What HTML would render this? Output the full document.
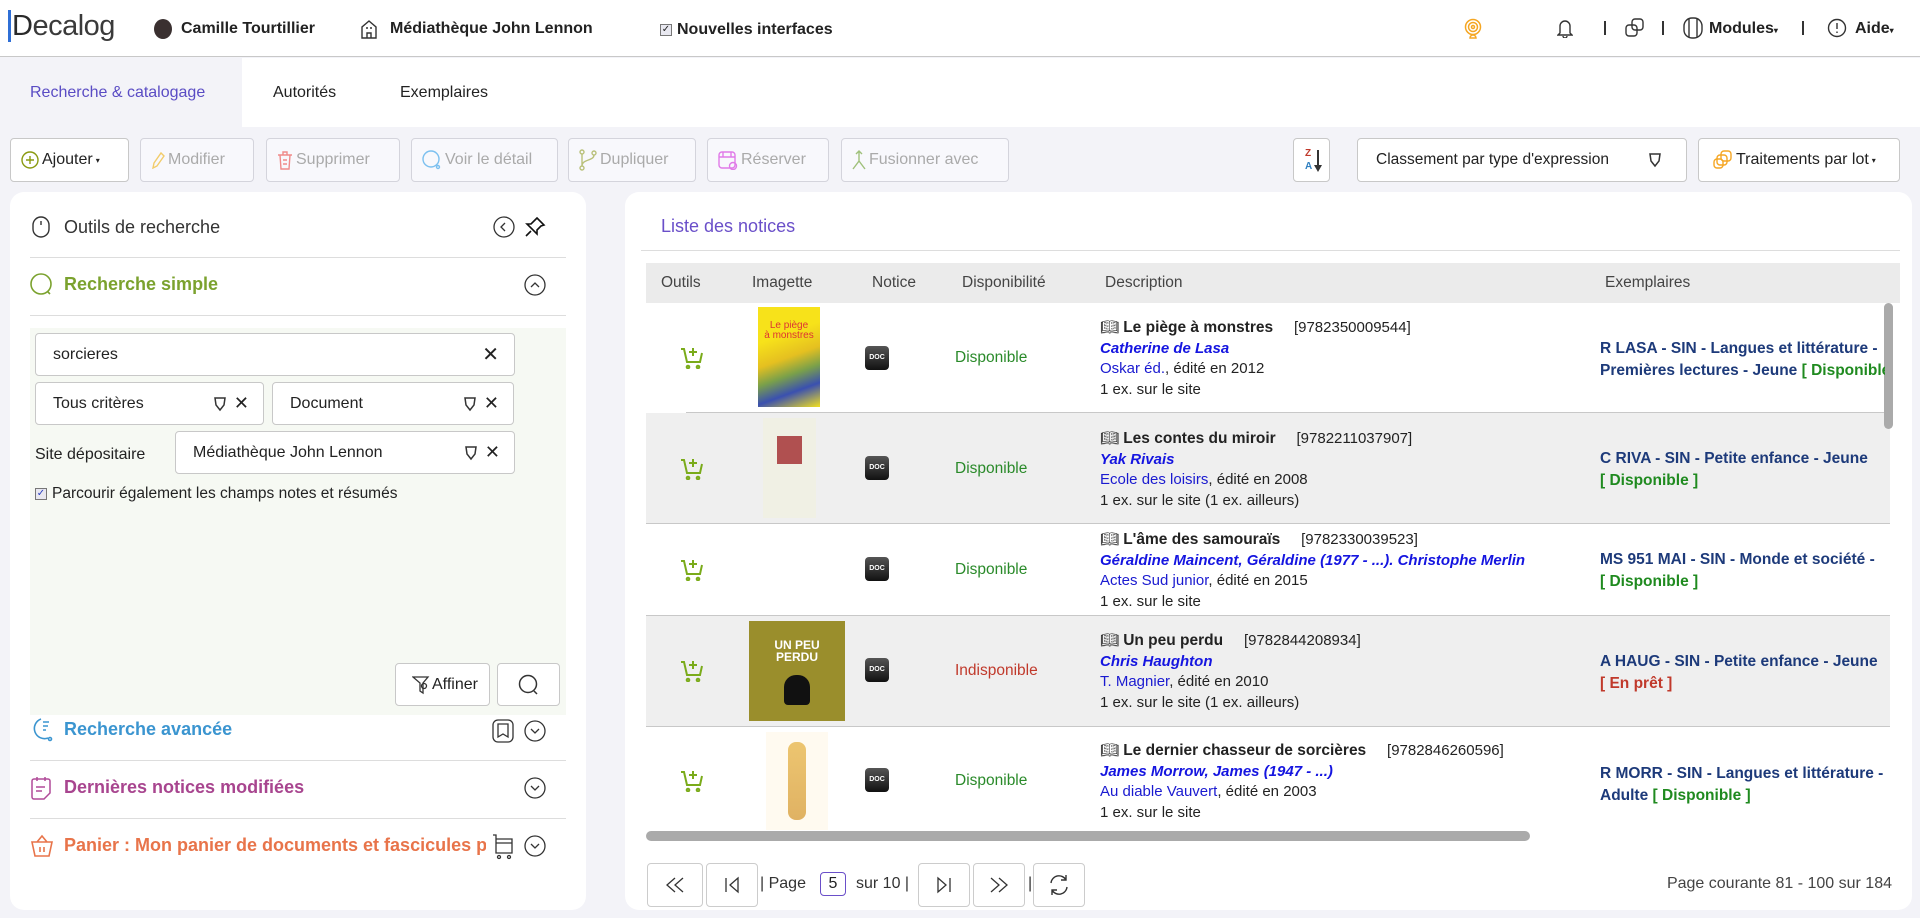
<!DOCTYPE html>
<html><head><meta charset="utf-8">
<style>
*{box-sizing:border-box;margin:0;padding:0}
body{width:1920px;height:918px;overflow:hidden;background:#f3f3f8;font-family:"Liberation Sans",sans-serif;font-size:15px;color:#222;position:relative}
.a{position:absolute;white-space:nowrap}
svg{display:block}
.btn{position:absolute;top:138px;height:44px;border:1px solid #d4d4dc;border-radius:4px;background:#f8f8fc;display:flex;align-items:center;padding:0 10px;color:#aaa;font-size:16px;gap:3px}
.box{position:absolute;border:1px solid #c8c8c8;border-radius:4px;background:#fff;display:flex;align-items:center;padding-left:17px;font-size:16px;color:#222}
.desc{position:absolute;left:1100px;line-height:20.5px;font-size:15px}
.desc b{font-size:15.5px}
.au{color:#1515e0;font-weight:bold;font-style:italic}
.pub{color:#1a1ad0}
.ex{position:absolute;left:1600px;width:285px;overflow:hidden;white-space:nowrap;color:#1d3a7a;font-weight:bold;line-height:22px;font-size:15.5px}
.g{color:#1f8a1f}
.doc{position:absolute;left:865px;width:24px;height:24px;border-radius:4px;background:linear-gradient(#555,#111);color:#fff;font-size:7px;font-weight:bold;text-align:center;line-height:24px}
.disp{position:absolute;left:955px;color:#2a8a2a;font-size:15.5px}
.cart{position:absolute;left:680px}
.pb{position:absolute;top:863px;height:44px;border:1px solid #ccc;border-radius:4px;background:#fff;display:flex;align-items:center;justify-content:center}
.hd{top:20px;font-weight:bold;font-size:16px}
</style></head><body>
<!-- header -->
<div class="a" style="left:0;top:0;width:1920px;height:57px;background:#fff;border-bottom:1px solid #c8c8c8"></div>
<div class="a" style="left:10px;top:10px;font-size:29px;color:#3a3a3a;letter-spacing:-0.5px"><span style="color:#2a2a2a;border-left:3px solid #2f6fd6;padding-left:1px;margin-left:-2px">D</span>ecalog</div>
<div class="a" style="left:154px;top:19px;width:18px;height:20px;border-radius:50%;background:#3a3030"></div>
<div class="a hd" style="left:181px">Camille Tourtillier</div>
<svg class="a" style="left:360px;top:19px" width="18" height="20" viewBox="0 0 18 20" fill="none" stroke="#333" stroke-width="1.4"><path d="M2 19V8L9 2l7 6v11zM7 19v-5h4v5M6 9h2M10 9h2"/></svg>
<div class="a hd" style="left:390px">Médiathèque John Lennon</div>
<div class="a" style="left:660px;top:24px;width:12px;height:12px;border:1px solid #777;background:#e8e8f0;font-size:10px;line-height:10px;text-align:center">✓</div>
<div class="a hd" style="left:677px;top:21px">Nouvelles interfaces</div>
<svg class="a" style="left:1464px;top:18px" width="18" height="22" viewBox="0 0 18 22" fill="none" stroke="#f5a623" stroke-width="1.5"><circle cx="9" cy="9" r="7.5"/><circle cx="9" cy="9" r="4.5"/><circle cx="9" cy="9" r="1.5"/><path d="M6 20a3 3 0 0 1 6 0z"/></svg>
<svg class="a" style="left:1557px;top:18px" width="16" height="20" viewBox="0 0 16 20" fill="none" stroke="#333" stroke-width="1.4"><path d="M3 15V8a5 5 0 0 1 10 0v7l2 2H1zM6 18a2 2 0 0 0 4 0"/></svg>
<div class="a" style="left:1604px;top:21px;width:2px;height:14px;background:#333"></div>
<svg class="a" style="left:1625px;top:18px" width="20" height="20" viewBox="0 0 20 20" fill="none" stroke="#333" stroke-width="1.4"><rect x="7" y="1" width="11" height="11" rx="3"/><rect x="1" y="7" width="11" height="11" rx="3"/></svg>
<div class="a" style="left:1662px;top:21px;width:2px;height:14px;background:#333"></div>
<svg class="a" style="left:1683px;top:17px" width="20" height="22" viewBox="0 0 20 22" fill="none" stroke="#333" stroke-width="1.4"><rect x="1" y="1" width="18" height="20" rx="8"/><path d="M6 2v18M14 2v18"/></svg>
<div class="a hd" style="left:1709px">Modules<span style="font-size:8px">▾</span></div>
<div class="a" style="left:1802px;top:21px;width:2px;height:14px;background:#333"></div>
<svg class="a" style="left:1827px;top:18px" width="20" height="20" viewBox="0 0 20 20" fill="none" stroke="#333" stroke-width="1.4"><circle cx="10" cy="10" r="8.5"/><path d="M10 5v6M10 13.5v1.5"/></svg>
<div class="a hd" style="left:1855px">Aide<span style="font-size:8px">▾</span></div>
<!-- tabs -->
<div class="a" style="left:0;top:58px;width:1920px;height:69px;background:#fff"></div>
<div class="a" style="left:0;top:58px;width:242px;height:69px;background:#f3f3f8"></div>
<div class="a" style="left:30px;top:84px;color:#5a4cc4;font-size:16px">Recherche &amp; catalogage</div>
<div class="a" style="left:273px;top:84px;font-size:16px;color:#222">Autorités</div>
<div class="a" style="left:400px;top:84px;font-size:16px;color:#222">Exemplaires</div>
<!-- toolbar -->
<div class="btn" style="left:10px;width:119px;background:#fff;color:#222;border-color:#c8c8c8"><svg width="18" height="18" viewBox="0 0 18 18" fill="none" stroke="#8a9a10" stroke-width="1.4"><circle cx="9" cy="9" r="8"/><path d="M9 5v8M5 9h8"/></svg>Ajouter<span style="font-size:8px">▾</span></div>
<div class="btn" style="left:140px;width:114px"><svg width="14" height="18" viewBox="0 0 14 18" fill="none" stroke="#f2cc6a" stroke-width="1.4"><path d="M2 17l1-5L10 2l3 3-7 10z"/></svg>Modifier</div>
<div class="btn" style="left:266px;width:134px"><svg width="16" height="20" viewBox="0 0 16 20" fill="none" stroke="#f08a8a" stroke-width="1.4"><path d="M1 5h14M6 5V2h4v3M3 5l1 14h8l1-14M6 10h4M6 14h4"/></svg>Supprimer</div>
<div class="btn" style="left:411px;width:147px"><svg width="20" height="20" viewBox="0 0 20 20" fill="none" stroke="#7cc0ef" stroke-width="1.4"><circle cx="9" cy="9" r="8"/><circle cx="16" cy="17" r="1.5"/></svg>Voir le détail</div>
<div class="btn" style="left:568px;width:128px"><svg width="18" height="22" viewBox="0 0 18 22" fill="none" stroke="#b9c07a" stroke-width="1.4"><circle cx="3" cy="3" r="2"/><circle cx="3" cy="19" r="2"/><circle cx="15" cy="4" r="2"/><path d="M3 5v12M15 6c0 6-12 4-12 11"/></svg>Dupliquer</div>
<div class="btn" style="left:707px;width:122px"><svg width="20" height="20" viewBox="0 0 20 20" fill="none" stroke="#e07ae8" stroke-width="1.4"><rect x="1" y="2" width="16" height="16" rx="3"/><path d="M1 7h16M5 2v5M13 2v5"/><circle cx="15" cy="16" r="3.5"/></svg>Réserver</div>
<div class="btn" style="left:841px;width:168px"><svg width="14" height="20" viewBox="0 0 14 20" fill="none" stroke="#9fc07a" stroke-width="1.4"><path d="M7 1v10L1 19M7 11l6 8M4 4l3-3 3 3"/></svg>Fusionner avec</div>
<div class="btn" style="left:1293px;width:37px;background:#fff;border-color:#c8c8c8;padding:0"><span class="a" style="left:11px;top:9px;color:#c0392b;font-size:10px;font-weight:bold">Z</span><span class="a" style="left:11px;top:22px;color:#2f7fc0;font-size:10px;font-weight:bold">A</span><svg class="a" style="left:20px;top:11px" width="8" height="22" viewBox="0 0 8 22" fill="#333"><path d="M3 0h2v15h3l-4 7-4-7h3z"/></svg></div>
<div class="btn" style="left:1357px;width:330px;background:#fff;color:#222;border-color:#c8c8c8;padding-left:18px;font-size:15.5px">Classement par type d'expression<svg style="margin-left:auto;margin-right:14px" width="14" height="16" viewBox="0 0 14 16" fill="none" stroke="#333" stroke-width="1.5"><path d="M2 2h10l-1 7-4 5-4-5z"/></svg></div>
<div class="btn" style="left:1698px;width:202px;background:#fff;color:#222;border-color:#c8c8c8;padding-left:14px;font-size:16px"><svg width="20" height="20" viewBox="0 0 20 20" fill="none" stroke="#f5a623" stroke-width="1.4"><rect x="8" y="1" width="10" height="10" rx="3"/><rect x="4" y="5" width="10" height="10" rx="3"/><rect x="1" y="9" width="9" height="9" rx="3"/></svg>Traitements par lot<span style="font-size:8px">▾</span></div>
<!-- left panel -->
<div class="a" style="left:10px;top:192px;width:576px;height:718px;background:#fff;border-radius:14px"></div>
<svg class="a" style="left:32px;top:216px" width="18" height="22" viewBox="0 0 18 22" fill="none" stroke="#333" stroke-width="1.4"><rect x="1" y="1" width="16" height="20" rx="8"/><path d="M9 5v4"/></svg>
<div class="a" style="left:64px;top:217px;font-size:18px;color:#333">Outils de recherche</div>
<svg class="a" style="left:493px;top:216px" width="22" height="22" viewBox="0 0 22 22" fill="none" stroke="#333" stroke-width="1.3"><circle cx="11" cy="11" r="10"/><path d="M12 7l-4 4 4 4"/></svg>
<svg class="a" style="left:524px;top:216px" width="22" height="22" viewBox="0 0 22 22" fill="none" stroke="#111" stroke-width="1.6"><path d="M13 2l7 7-3 1-4 4 0 4-10-10 4 0 4-4zM7 15l-5 5"/></svg>
<div class="a" style="left:30px;top:257px;width:536px;height:1px;background:#ddd"></div>
<svg class="a" style="left:30px;top:273px" width="24" height="24" viewBox="0 0 24 24" fill="none" stroke="#7ba22e" stroke-width="1.6"><circle cx="11" cy="11" r="10"/><path d="M18 19l2 2"/></svg>
<div class="a" style="left:64px;top:274px;font-size:18px;color:#7ba22e;font-weight:bold">Recherche simple</div>
<svg class="a" style="left:524px;top:273px" width="22" height="24" viewBox="0 0 22 24" fill="none" stroke="#333" stroke-width="1.3"><circle cx="11" cy="12" r="10"/><path d="M7 14l4-4 4 4"/></svg>
<div class="a" style="left:30px;top:315px;width:536px;height:1px;background:#ddd"></div>
<div class="a" style="left:30px;top:328px;width:536px;height:387px;background:#f6f9f3"></div>
<div class="box" style="left:35px;top:333px;width:480px;height:43px">sorcieres<span style="margin-left:auto;margin-right:15px;font-size:20px">✕</span></div>
<div class="box" style="left:35px;top:382px;width:229px;height:43px">Tous critères<svg style="margin-left:auto" width="14" height="16" viewBox="0 0 14 16" fill="none" stroke="#333" stroke-width="1.5"><path d="M2 2h10l-1 7-4 5-4-5z"/></svg><span style="margin:0 14px 0 7px;font-size:18px">✕</span></div>
<div class="box" style="left:272px;top:382px;width:242px;height:43px">Document<svg style="margin-left:auto" width="14" height="16" viewBox="0 0 14 16" fill="none" stroke="#333" stroke-width="1.5"><path d="M2 2h10l-1 7-4 5-4-5z"/></svg><span style="margin:0 14px 0 7px;font-size:18px">✕</span></div>
<div class="a" style="left:35px;top:446px;font-size:16px">Site dépositaire</div>
<div class="box" style="left:175px;top:431px;width:340px;height:43px">Médiathèque John Lennon<svg style="margin-left:auto" width="14" height="16" viewBox="0 0 14 16" fill="none" stroke="#333" stroke-width="1.5"><path d="M2 2h10l-1 7-4 5-4-5z"/></svg><span style="margin:0 14px 0 7px;font-size:18px">✕</span></div>
<div class="a" style="left:35px;top:488px;width:12px;height:12px;border:1px solid #777;background:#e8e8f0;font-size:10px;line-height:10px;text-align:center;color:#2a3fbf">✓</div>
<div class="a" style="left:52px;top:485px;font-size:15.5px">Parcourir également les champs notes et résumés</div>
<div class="box" style="left:395px;top:663px;width:95px;height:43px;padding-left:16px;gap:2px"><svg width="18" height="20" viewBox="0 0 18 20" fill="none" stroke="#333" stroke-width="1.3"><path d="M1 2h15l-5 6v10l-3-2V8z"/><circle cx="12" cy="11" r="2.5"/></svg>Affiner</div>
<div class="box" style="left:497px;top:663px;width:63px;height:43px;padding:0;justify-content:center"><svg width="22" height="22" viewBox="0 0 22 22" fill="none" stroke="#333" stroke-width="1.5"><circle cx="10" cy="10" r="8.5"/><path d="M16 17l3 3"/></svg></div>
<svg class="a" style="left:30px;top:718px" width="24" height="24" viewBox="0 0 24 24" fill="none" stroke="#3b95d0" stroke-width="1.6"><path d="M18 20A10 10 0 1 1 11 1M13 4h6M13 8h5M13 12h3"/><circle cx="20" cy="21" r="1.5"/></svg>
<div class="a" style="left:64px;top:719px;font-size:18px;color:#3b95d0;font-weight:bold">Recherche avancée</div>
<svg class="a" style="left:492px;top:719px" width="22" height="24" viewBox="0 0 22 24" fill="none" stroke="#333" stroke-width="1.3"><rect x="1" y="1" width="20" height="22" rx="5"/><path d="M6 5h10v13l-5-3-5 3z"/></svg>
<svg class="a" style="left:524px;top:719px" width="22" height="24" viewBox="0 0 22 24" fill="none" stroke="#333" stroke-width="1.3"><circle cx="11" cy="12" r="10"/><path d="M7 10l4 4 4-4"/></svg>
<div class="a" style="left:30px;top:760px;width:536px;height:1px;background:#ddd"></div>
<svg class="a" style="left:30px;top:776px" width="22" height="24" viewBox="0 0 22 24" fill="none" stroke="#b04a98" stroke-width="1.5"><path d="M4 3h14a2 2 0 0 1 2 2v12l-6 6H4a2 2 0 0 1-2-2V5a2 2 0 0 1 2-2zM7 1v4M15 1v4M6 11h9M6 15h6"/></svg>
<div class="a" style="left:64px;top:777px;font-size:18px;color:#a8458f;font-weight:bold">Dernières notices modifiées</div>
<svg class="a" style="left:524px;top:776px" width="22" height="24" viewBox="0 0 22 24" fill="none" stroke="#333" stroke-width="1.3"><circle cx="11" cy="12" r="10"/><path d="M7 10l4 4 4-4"/></svg>
<div class="a" style="left:30px;top:818px;width:536px;height:1px;background:#ddd"></div>
<svg class="a" style="left:30px;top:834px" width="24" height="24" viewBox="0 0 24 24" fill="none" stroke="#e8744a" stroke-width="1.6"><path d="M2 8h20l-3 14H5zM7 8l5-6 5 6M10 13v5M14 13v5"/></svg>
<div class="a" style="left:64px;top:835px;font-size:18px;color:#e8744a;font-weight:bold;width:422px;overflow:hidden">Panier : Mon panier de documents et fascicules par défaut</div>
<svg class="a" style="left:492px;top:834px" width="22" height="26" viewBox="0 0 22 26" fill="none" stroke="#333" stroke-width="1.3"><path d="M1 1h3v18h16V5H4M4 9h16"/><circle cx="7" cy="23" r="1.5"/><circle cx="17" cy="23" r="1.5"/></svg>
<svg class="a" style="left:524px;top:834px" width="22" height="24" viewBox="0 0 22 24" fill="none" stroke="#333" stroke-width="1.3"><circle cx="11" cy="12" r="10"/><path d="M7 10l4 4 4-4"/></svg>
<!-- right panel -->
<div class="a" style="left:625px;top:192px;width:1287px;height:718px;background:#fff;border-radius:14px"></div>
<div class="a" style="left:661px;top:216px;font-size:18px;color:#6a4fc9">Liste des notices</div>
<div class="a" style="left:641px;top:250px;width:1259px;height:1px;background:#ddd"></div>
<div class="a" style="left:646px;top:263px;width:1254px;height:40px;background:#ebebeb"></div>
<div class="a" style="left:661px;top:274px;color:#444;font-size:15.5px">Outils</div>
<div class="a" style="left:752px;top:274px;color:#444;font-size:15.5px">Imagette</div>
<div class="a" style="left:872px;top:274px;color:#444;font-size:15.5px">Notice</div>
<div class="a" style="left:962px;top:274px;color:#444;font-size:15.5px">Disponibilité</div>
<div class="a" style="left:1105px;top:274px;color:#444;font-size:15.5px">Description</div>
<div class="a" style="left:1605px;top:274px;color:#444;font-size:15.5px">Exemplaires</div>
<!-- row backgrounds -->
<div class="a" style="left:646px;top:413px;width:1244px;height:110px;background:#efefef"></div>
<div class="a" style="left:646px;top:615px;width:1244px;height:111px;background:#efefef"></div>
<div class="a" style="left:686px;top:412px;width:1204px;height:1px;background:#c8c8c8"></div>
<div class="a" style="left:646px;top:523px;width:1244px;height:1px;background:#c8c8c8"></div>
<div class="a" style="left:646px;top:615px;width:1244px;height:1px;background:#c8c8c8"></div>
<div class="a" style="left:646px;top:726px;width:1244px;height:1px;background:#c8c8c8"></div>
<div class="a" style="left:1884px;top:303px;width:9px;height:126px;border-radius:5px;background:#aaa"></div>
<!-- row 1 -->
<svg class="cart" style="top:347px" width="24" height="22" viewBox="0 0 24 22" fill="none" stroke="#7aab1a" stroke-width="2"><path d="M1 2h3l3 13h13l2-9M13 1v8M9 5h8"/><circle cx="8" cy="20" r="1.3"/><circle cx="18" cy="20" r="1.3"/></svg>
<div class="a" style="left:758px;top:307px;width:62px;height:100px;background:linear-gradient(160deg,#f7e21a 30%,#e5c020 50%,#7aa04a 65%,#3a50b0 80%,#f2e020)"><div style="color:#d33;font-size:10px;text-align:center;margin-top:14px;line-height:10px;white-space:normal">Le piège<br>à monstres</div></div>
<div class="doc" style="top:346px">DOC</div>
<div class="disp" style="top:349px">Disponible</div>
<div class="desc" style="top:318px">📖︎ <b>Le piège à monstres</b>&nbsp;&nbsp;&nbsp;&nbsp;&nbsp;[9782350009544]<br><span class="au">Catherine de Lasa</span><br><span class="pub">Oskar éd.</span>, édité en 2012<br>1 ex. sur le site</div>
<div class="ex" style="top:338px">R LASA - SIN - Langues et littérature -<br>Premières lectures - Jeune <span class="g">[ Disponible ]</span></div>
<!-- row 2 -->
<svg class="cart" style="top:458px" width="24" height="22" viewBox="0 0 24 22" fill="none" stroke="#7aab1a" stroke-width="2"><path d="M1 2h3l3 13h13l2-9M13 1v8M9 5h8"/><circle cx="8" cy="20" r="1.3"/><circle cx="18" cy="20" r="1.3"/></svg>
<div class="a" style="left:763px;top:418px;width:53px;height:100px;background:#f0f0e4"><div style="margin:18px 14px 0;height:28px;background:#b05050"></div></div>
<div class="doc" style="top:456px">DOC</div>
<div class="disp" style="top:460px">Disponible</div>
<div class="desc" style="top:429px">📖︎ <b>Les contes du miroir</b>&nbsp;&nbsp;&nbsp;&nbsp;&nbsp;[9782211037907]<br><span class="au">Yak Rivais</span><br><span class="pub">Ecole des loisirs</span>, édité en 2008<br>1 ex. sur le site (1 ex. ailleurs)</div>
<div class="ex" style="top:448px">C RIVA - SIN - Petite enfance - Jeune<br><span class="g">[ Disponible ]</span></div>
<!-- row 3 -->
<svg class="cart" style="top:559px" width="24" height="22" viewBox="0 0 24 22" fill="none" stroke="#7aab1a" stroke-width="2"><path d="M1 2h3l3 13h13l2-9M13 1v8M9 5h8"/><circle cx="8" cy="20" r="1.3"/><circle cx="18" cy="20" r="1.3"/></svg>
<div class="doc" style="top:557px">DOC</div>
<div class="disp" style="top:561px">Disponible</div>
<div class="desc" style="top:530px">📖︎ <b>L'âme des samouraïs</b>&nbsp;&nbsp;&nbsp;&nbsp;&nbsp;[9782330039523]<br><span class="au">Géraldine Maincent, Géraldine (1977 - ...). Christophe Merlin</span><br><span class="pub">Actes Sud junior</span>, édité en 2015<br>1 ex. sur le site</div>
<div class="ex" style="top:549px">MS 951 MAI - SIN - Monde et société -<br><span class="g">[ Disponible ]</span></div>
<!-- row 4 -->
<svg class="cart" style="top:660px" width="24" height="22" viewBox="0 0 24 22" fill="none" stroke="#7aab1a" stroke-width="2"><path d="M1 2h3l3 13h13l2-9M13 1v8M9 5h8"/><circle cx="8" cy="20" r="1.3"/><circle cx="18" cy="20" r="1.3"/></svg>
<div class="a" style="left:749px;top:621px;width:96px;height:100px;background:#9a8e2c;color:#fff;font-weight:bold;font-size:12px;text-align:center;line-height:12px;white-space:normal;padding-top:18px">UN PEU<br>PERDU<div style="width:26px;height:30px;border-radius:12px 12px 4px 4px;background:#111;margin:12px auto 0"></div></div>
<div class="doc" style="top:658px">DOC</div>
<div class="disp" style="top:662px;color:#c0392b">Indisponible</div>
<div class="desc" style="top:631px">📖︎ <b>Un peu perdu</b>&nbsp;&nbsp;&nbsp;&nbsp;&nbsp;[9782844208934]<br><span class="au">Chris Haughton</span><br><span class="pub">T. Magnier</span>, édité en 2010<br>1 ex. sur le site (1 ex. ailleurs)</div>
<div class="ex" style="top:651px">A HAUG - SIN - Petite enfance - Jeune<br><span style="color:#c0392b">[ En prêt ]</span></div>
<!-- row 5 -->
<svg class="cart" style="top:770px" width="24" height="22" viewBox="0 0 24 22" fill="none" stroke="#7aab1a" stroke-width="2"><path d="M1 2h3l3 13h13l2-9M13 1v8M9 5h8"/><circle cx="8" cy="20" r="1.3"/><circle cx="18" cy="20" r="1.3"/></svg>
<div class="a" style="left:766px;top:732px;width:62px;height:98px;background:#fffaf0"><div style="margin:10px 22px;height:78px;background:linear-gradient(#e8b850,#d8a040);border-radius:8px;opacity:.8"></div></div>
<div class="doc" style="top:768px">DOC</div>
<div class="disp" style="top:772px">Disponible</div>
<div class="desc" style="top:741px">📖︎ <b>Le dernier chasseur de sorcières</b>&nbsp;&nbsp;&nbsp;&nbsp;&nbsp;[9782846260596]<br><span class="au">James Morrow, James (1947 - ...)</span><br><span class="pub">Au diable Vauvert</span>, édité en 2003<br>1 ex. sur le site</div>
<div class="ex" style="top:763px">R MORR - SIN - Langues et littérature -<br>Adulte <span class="g">[ Disponible ]</span></div>
<!-- h scrollbar -->
<div class="a" style="left:646px;top:831px;width:884px;height:10px;border-radius:5px;background:#aaa"></div>
<!-- pagination -->
<div class="pb" style="left:647px;width:56px"><svg width="22" height="18" viewBox="0 0 22 18" fill="none" stroke="#333" stroke-width="1.3"><path d="M11 2L3 9l8 7M19 2l-8 7 8 7"/></svg></div>
<div class="pb" style="left:706px;width:52px"><svg width="16" height="18" viewBox="0 0 16 18" fill="none" stroke="#333" stroke-width="1.3"><path d="M2 2v14M14 2L6 9l8 7z"/></svg></div>
<div class="a" style="left:760px;top:875px;font-size:16px;color:#333">| Page</div>
<div class="a" style="left:820px;top:872px;width:26px;height:24px;border:1px solid #6a4fc9;border-radius:4px;text-align:center;font-size:16px;line-height:22px">5</div>
<div class="a" style="left:856px;top:875px;font-size:16px;color:#333">sur 10 |</div>
<div class="pb" style="left:918px;width:52px"><svg width="16" height="18" viewBox="0 0 16 18" fill="none" stroke="#333" stroke-width="1.3"><path d="M14 2v14M2 2l8 7-8 7z"/></svg></div>
<div class="pb" style="left:973px;width:52px"><svg width="22" height="18" viewBox="0 0 22 18" fill="none" stroke="#333" stroke-width="1.3"><path d="M3 2l8 7-8 7M11 2l8 7-8 7"/></svg></div>
<div class="a" style="left:1028px;top:875px;font-size:16px;color:#333">|</div>
<div class="pb" style="left:1033px;width:52px"><svg width="22" height="22" viewBox="0 0 22 22" fill="none" stroke="#333" stroke-width="1.4"><path d="M3 9a8 8 0 0 1 15-3M19 13a8 8 0 0 1-15 3M18 1v5h-5M4 21v-5h5"/></svg></div>
<div class="a" style="right:28px;top:875px;font-size:16px;color:#444">Page courante 81 - 100 sur 184</div>
</body></html>
